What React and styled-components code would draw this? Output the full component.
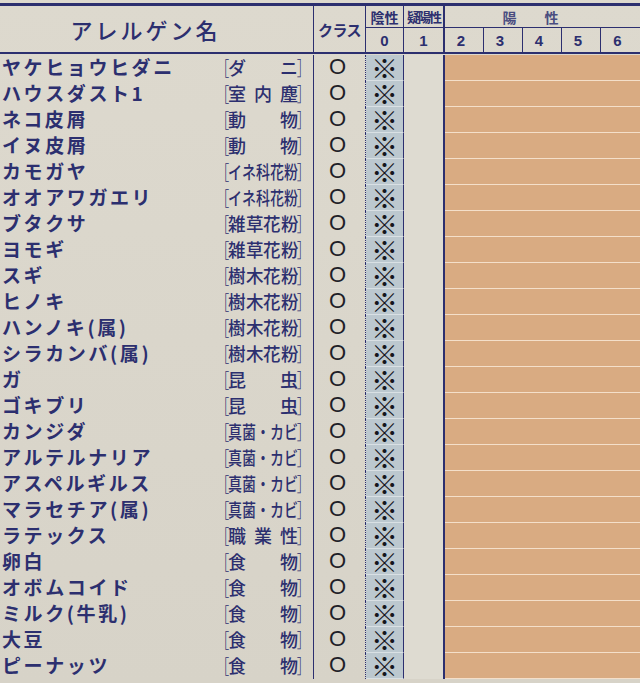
import styled, { createGlobalStyle } from "styled-components";

const NAVY = "#2c2f6f";
const COLS = "216px 98px 52px 38px 41px 195px";

const rows = [
  ["ヤケヒョウヒダニ", "ダニ"],
  ["ハウスダスト1", "室内塵"],
  ["ネコ皮屑", "動物"],
  ["イヌ皮屑", "動物"],
  ["カモガヤ", "イネ科花粉"],
  ["オオアワガエリ", "イネ科花粉"],
  ["ブタクサ", "雑草花粉"],
  ["ヨモギ", "雑草花粉"],
  ["スギ", "樹木花粉"],
  ["ヒノキ", "樹木花粉"],
  ["ハンノキ(属)", "樹木花粉"],
  ["シラカンバ(属)", "樹木花粉"],
  ["ガ", "昆虫"],
  ["ゴキブリ", "昆虫"],
  ["カンジダ", "真菌・カビ"],
  ["アルテルナリア", "真菌・カビ"],
  ["アスペルギルス", "真菌・カビ"],
  ["マラセチア(属)", "真菌・カビ"],
  ["ラテックス", "職業性"],
  ["卵白", "食物"],
  ["オボムコイド", "食物"],
  ["ミルク(牛乳)", "食物"],
  ["大豆", "食物"],
  ["ピーナッツ", "食物"],
];

const Global = createGlobalStyle`
  html, body {
    margin: 0;
    padding: 0;
    overflow: hidden;
    background: #dcd8cc;
  }
  body {
    font-family: "Noto Sans CJK JP", "Noto Sans", sans-serif;
  }
`;

export default function App() {
  return (
    <>
      <Global />
      <Page>
        <Sheet>
          <Header>
            <NameHead>アレルゲン名</NameHead>
            <ClassHead>クラス</ClassHead>
            <TopHead $col={4}>陰性</TopHead>
            <TopHead $col={5} $narrow>疑陽性</TopHead>
            <TopHead $col={6} $wide>陽　　性</TopHead>
            <NumHead $col={4}>0</NumHead>
            <NumHead $col={5}>1</NumHead>
            <NumGroup>
              {[2, 3, 4, 5, 6].map((n) => (
                <NumCell key={n}>{n}</NumCell>
              ))}
            </NumGroup>
          </Header>
          <Body>
            {rows.map(([name, cat]) => (
              <Row key={name}>
                <Name>{name}</Name>
                <CatCell>
                  <Category text={cat} />
                </CatCell>
                <ClassCell>O</ClassCell>
                <NegCell>※</NegCell>
                <DoubtCell />
                <PosCell />
              </Row>
            ))}
          </Body>
        </Sheet>
      </Page>
    </>
  );
}

function Category({ text }) {
  const chars = Array.from(text);
  const inner = 70;
  const w = chars.length > 3 ? inner / chars.length : 18;
  const s = Math.min(1, w / 18);
  return (
    <CatBox>
      <Bracket>［</Bracket>
      <CatInner>
        {chars.map((c, i) => (
          <CatChar key={i} $w={w} $s={s}>
            {c}
          </CatChar>
        ))}
      </CatInner>
      <Bracket>］</Bracket>
    </CatBox>
  );
}

const Page = styled.div`
  width: 640px;
  height: 683px;
  overflow: hidden;
  padding-top: 3px;
  box-sizing: border-box;
  background: linear-gradient(180deg, #ddd9ce 0%, #d7d3c8 100%);
`;

const Sheet = styled.div`
  width: 652px;
  border-top: 3px solid ${NAVY};
  border-right: 3px solid ${NAVY};
  border-top-right-radius: 14px;
`;

const Header = styled.div`
  display: grid;
  grid-template-columns: ${COLS};
  grid-template-rows: 22px 24px;
  border-bottom: 2px solid ${NAVY};
  color: ${NAVY};
  font-weight: 700;
`;

const NameHead = styled.div`
  grid-column: 1 / 3;
  grid-row: 1 / 3;
  display: flex;
  align-items: center;
  justify-content: center;
  padding-right: 22px;
  font-size: 22px;
  font-weight: 500;
  letter-spacing: 3px;
  border-right: 1px solid ${NAVY};
`;

const ClassHead = styled.div`
  grid-column: 3;
  grid-row: 1 / 3;
  display: flex;
  align-items: center;
  justify-content: center;
  font-size: 15px;
  letter-spacing: -0.5px;
  border-right: 1px solid ${NAVY};
`;

const TopHead = styled.div`
  grid-column: ${(p) => p.$col};
  grid-row: 1;
  display: flex;
  align-items: center;
  justify-content: center;
  font-size: ${(p) => (p.$narrow ? "13px" : "14px")};
  letter-spacing: ${(p) => (p.$narrow ? "-2px" : "0")};
  padding-right: ${(p) => (p.$wide ? "24px" : "0")};
  border-bottom: 1px solid ${NAVY};
  border-right: ${(p) => (p.$col === 5 ? `2px solid ${NAVY}` : p.$col === 4 ? `1px solid ${NAVY}` : "none")};
  color: ${(p) => (p.$wide ? "#4a4d80" : NAVY)};
`;

const NumHead = styled.div`
  grid-column: ${(p) => p.$col};
  grid-row: 2;
  display: flex;
  align-items: center;
  justify-content: center;
  font-family: "Liberation Sans", "Noto Sans", sans-serif;
  font-size: 15px;
  border-right: ${(p) => (p.$col === 5 ? `2px solid ${NAVY}` : `1px solid ${NAVY}`)};
`;

const NumGroup = styled.div`
  grid-column: 6;
  grid-row: 2;
  display: grid;
  grid-template-columns: repeat(5, 1fr);
`;

const NumCell = styled.div`
  display: flex;
  align-items: center;
  justify-content: center;
  font-family: "Liberation Sans", "Noto Sans", sans-serif;
  font-size: 15px;
  padding-right: 6px;
  border-right: 1px solid ${NAVY};
  &:last-child {
    border-right: none;
  }
`;

const Body = styled.div`
  display: flex;
  flex-direction: column;
  padding-top: 1px;
`;

const Row = styled.div`
  display: grid;
  grid-template-columns: ${COLS};
  height: 26px;
`;

const Name = styled.div`
  display: flex;
  align-items: center;
  padding: 0 0 3px 2px;
  font-size: 19px;
  line-height: 1;
  font-weight: 700;
  letter-spacing: 2.6px;
  color: ${NAVY};
  white-space: nowrap;
`;

const CatCell = styled.div`
  display: flex;
  align-items: center;
  padding-bottom: 3px;
  border-right: 1px solid ${NAVY};
`;

const CatBox = styled.div`
  display: flex;
  align-items: center;
  width: 92px;
  margin-left: 1px;
  color: ${NAVY};
  font-size: 18px;
  line-height: 1;
`;

const Bracket = styled.span`
  width: 11px;
  font-weight: 300;
  display: inline-flex;
  justify-content: center;
  transform: scale(0.75, 1.1);
`;

const CatInner = styled.span`
  flex: 1;
  display: flex;
  justify-content: space-between;
  font-weight: 500;
`;

const CatChar = styled.span`
  display: inline-flex;
  justify-content: center;
  width: ${(p) => p.$w}px;
  transform: scaleX(${(p) => p.$s});
`;

const ClassCell = styled.div`
  display: flex;
  align-items: center;
  justify-content: center;
  padding: 0 4px 2px 0;
  font-family: "Liberation Sans", "DejaVu Sans", sans-serif;
  font-size: 22px;
  line-height: 1;
  color: #1f1f28;
  border-right: 1px dotted ${NAVY};
`;

const NegCell = styled.div`
  display: flex;
  align-items: center;
  justify-content: center;
  font-family: "Noto Sans CJK JP", sans-serif;
  font-size: 27px;
  font-weight: 400;
  line-height: 22px;
  color: #15151c;
  background: #bcc8cf;
  border-bottom: 1px solid rgba(240, 244, 246, 0.55);
  border-right: 1px solid ${NAVY};
`;

const DoubtCell = styled.div`
  background: #dedbd1;
  border-right: 2px solid ${NAVY};
`;

const PosCell = styled.div`
  background: #d9ab82;
  border-bottom: 1.5px solid rgba(250, 236, 220, 0.8);
`;
